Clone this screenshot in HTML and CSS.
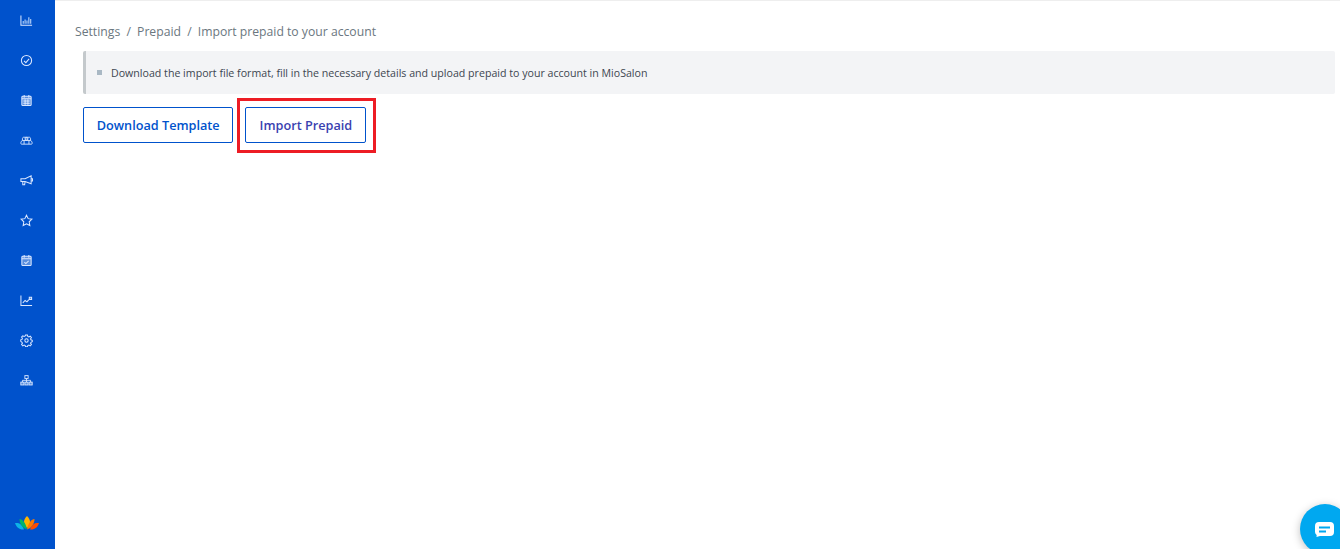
FILE: index.html
```html
<!DOCTYPE html>
<html lang="en">
<head>
<meta charset="utf-8">
<title>Import prepaid</title>
<link rel="stylesheet" href="styles.css">
</head>
<body>
<div class="app">
  <nav class="sidebar">
    <ul class="nav-list">
      <li class="nav-item"><svg class="icon" viewBox="0 0 14 14"><path d="M1 1.500v10.500h12"/><path class="bars" d="M3.500 10.500V7.500M5.500 10.500V6M7.500 10.500V7M9.500 10.500V3.500M11.500 10.500V5.500"/></svg></li>
      <li class="nav-item"><svg class="icon" viewBox="0 0 14 14"><circle cx="7" cy="7" r="5.500"/><path d="M4.300 7.300l2 2 3.500-4"/></svg></li>
      <li class="nav-item"><svg class="icon" viewBox="0 0 14 14"><rect class="soft" x="2" y="2.500" width="10" height="10" rx="1"/><path d="M4.500 1v3M9.500 1v3M2 5h10M3.500 7.500h7M3.500 10h7M5.500 6v5.500M8.500 6v5.500"/></svg></li>
      <li class="nav-item"><svg class="icon" viewBox="0 0 16 14"><circle class="soft" cx="8" cy="5" r="1.800"/><path d="M4.500 3h7c1 0 1.500 .8 1.500 2v2M4.500 3C3.500 3 3 3.800 3 5v2M1 10.500C1 8.500 2 7 3.500 7h9c1.500 0 2.500 1.500 2.500 3.500 0 .5-.3 1-1 1H2c-.7 0-1-.5-1-1zM5 7v4.500M11 7v4.500"/></svg></li>
      <li class="nav-item"><svg class="icon" viewBox="0 0 14 14"><path d="M1 5h4.500L12 2v8.500L5.500 8H1zM3 8v3.500h2l.5-3.500M12 5h1.500v2.500H12"/></svg></li>
      <li class="nav-item"><svg class="icon" viewBox="0 0 14 14"><path d="M7 1.300l1.800 3.700 4 .6-2.900 2.800.7 4L7 10.500l-3.600 1.900.7-4L1.200 5.600l4-.6z"/></svg></li>
      <li class="nav-item"><svg class="icon" viewBox="0 0 14 14"><rect class="soft" x="2" y="2.500" width="10" height="10" rx="1"/><path d="M4.500 1v3M9.500 1v3M2 5h10M4.700 8.700l1.600 1.600 3-3"/></svg></li>
      <li class="nav-item"><svg class="icon" viewBox="0 0 14 14"><path d="M1 1.500v11h12M3 9.500l2.500-2.500 2 1.500L9.500 6"/><path class="soft" d="M10 3.500h2.500V6H10z"/></svg></li>
      <li class="nav-item"><svg class="icon" viewBox="0 0 14 14"><circle cx="7" cy="7" r="1.800"/><path d="M6 1.500h2l.4 1.500 1.200.6 1.400-.8 1.300 1.500-.9 1.300.4 1.200 1.400.6v1.600l-1.400.6-.4 1.200.9 1.300-1.300 1.500-1.400-.8-1.200.5-.4 1.400H6l-.4-1.400-1.200-.5-1.400.8-1.300-1.500.9-1.300-.4-1.200L.8 8.500V6.900l1.400-.6.4-1.200-.9-1.300 1.300-1.500 1.400.8 1.200-.6z" transform="translate(0 -.3) scale(1 .96)"/></svg></li>
      <li class="nav-item"><svg class="icon" viewBox="0 0 16 14"><rect x="6" y="1" width="4" height="3.500"/><rect class="soft" x="1" y="9" width="3.800" height="3.500"/><rect class="soft" x="6.100" y="9" width="3.800" height="3.500"/><rect class="soft" x="11.200" y="9" width="3.800" height="3.500"/><path d="M8 4.500V9M3 9V6.800h10V9"/></svg></li>
    </ul>
    <div class="brand">
      <svg class="lotus" viewBox="0 0 24 14">
        <path fill="#ffb300" d="M12 0c2 2 3 4 3 6 0 3-1.500 5-3 6-1.500-1-3-3-3-6 0-2 1-4 3-6z"/>
        <path fill="#0db4e6" d="M0 7c4-.5 7 1 9 6.500C4.500 14 1.500 11.500 0 7z"/>
        <path fill="#00b36b" d="M4.500 3c3 .5 6 3 7.500 10.500C7.500 12 4.500 8 4.500 3z"/>
        <path fill="#ff7a00" d="M19.500 3c-3 .5-6 3-7.500 10.500C16.500 12 19.500 8 19.500 3z"/>
        <path fill="#ff4d00" d="M24 7c-4-.5-7 1-9 6.500C19.500 14 22.500 11.500 24 7z"/>
      </svg>
    </div>
  </nav>
  <main class="content">
    <ol class="breadcrumb">
      <li>Settings</li>
      <li class="sep">/</li>
      <li>Prepaid</li>
      <li class="sep">/</li>
      <li>Import prepaid to your account</li>
    </ol>
    <div class="panel">
      <div class="notice">
        <span class="bullet"></span>
        <span>Download the import file format, fill in the necessary details and upload prepaid to your account in MioSalon</span>
      </div>
      <div class="actions">
        <button class="btn" type="button">Download Template</button>
        <div class="highlighted">
          <button class="btn btn-focus" type="button">Import Prepaid</button>
          <span class="red-box"></span>
        </div>
      </div>
    </div>
  </main>
</div>
<div class="chat">
  <svg class="chat-icon" viewBox="0 0 19 15"><path fill="#fff" d="M4 0h11a4 4 0 0 1 4 4v6a4 4 0 0 1-4 4H5l-3.500 1 .2-2A4 4 0 0 1 0 10V4a4 4 0 0 1 4-4z"/><path fill="#00a8f0" d="M4 4.500h11v2H4zM4 8.500h7v2H4z"/></svg>
</div>
</body>
</html>
```
FILE: styles.css
```css
* { box-sizing: border-box; }
html, body { height: 100%; }
body {
  margin: 0;
  background: #fff;
  font-family: "Open Sans", "Noto Sans", "Liberation Sans", sans-serif;
  overflow: hidden;
}
.app {
  display: flex;
  height: 549px;
  border-top: 1px solid #eeeeee;
}
.sidebar {
  width: 55px;
  flex: none;
  margin-top: -1px;
  background: #0052cc;
  display: flex;
  flex-direction: column;
  justify-content: space-between;
}
.nav-list {
  list-style: none;
  margin: 0;
  padding: 0 2px 0 0;
}
.nav-item {
  height: 40px;
  display: flex;
  align-items: center;
  justify-content: center;
}
.icon {
  width: 13px;
  height: 13px;
  fill: none;
  stroke: #dbe8ff;
  stroke-width: 1.100;
}
.soft { fill: rgba(255, 255, 255, .35); }
.bars { stroke: #a9c8f5; stroke-width: 1.300; }
.brand {
  height: 50px;
  display: flex;
  justify-content: center;
  padding: 17px 2px 0 0;
}
.lotus { width: 24px; height: 14px; }
.content {
  flex: 1;
  min-width: 0;
  padding: 21px 5px 0 20px;
}
.breadcrumb {
  list-style: none;
  margin: 0;
  padding: 0;
  display: flex;
  gap: 6.200px;
  font-size: 12.200px;
  line-height: 20px;
  color: #6b7780;
}
.panel { margin: 9px 0 0 8px; }
.notice {
  height: 43px;
  display: flex;
  align-items: center;
  gap: 9px;
  padding-left: 11px;
  background: #f3f4f6;
  border-left: 3px solid #c4c9cc;
  border-radius: 2px;
  font-size: 10.630px;
  color: #3d4650;
}
.bullet {
  width: 5px;
  height: 5px;
  background: #a9b8c4;
}
.actions {
  display: flex;
  align-items: flex-start;
  gap: 12px;
  margin-top: 13px;
}
.btn {
  height: 36px;
  padding: 0 12.700px;
  background: #fff;
  border: 1px solid #0052cc;
  border-radius: 2px;
  font: 600 12.700px "Open Sans", "Noto Sans", sans-serif;
  color: #0052cc;
}
.btn-focus { color: #3a3fb0; padding: 0 13.200px; }
.highlighted { position: relative; }
.red-box {
  position: absolute;
  left: -8px;
  right: -10px;
  top: -9px;
  bottom: -10px;
  border: 3px solid #ed1c24;
}
.chat {
  position: fixed;
  left: 1300px;
  top: 504px;
  width: 50px;
  height: 50px;
  border-radius: 50%;
  background: #00a8f0;
  box-shadow: 0 2px 8px rgba(0, 0, 0, .25);
  display: flex;
  align-items: center;
  justify-content: center;
  padding-right: 1px;
}
.chat-icon { width: 19px; height: 15px; }
```
